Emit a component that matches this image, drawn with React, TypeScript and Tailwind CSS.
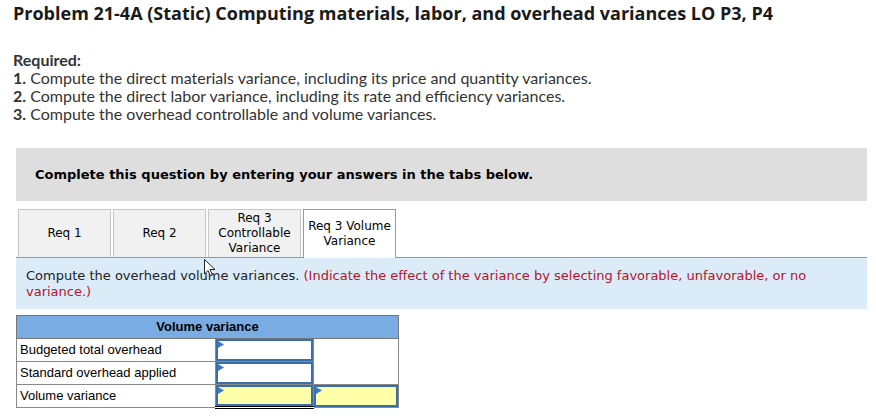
import React from "react";

const lato = "font-['Lato','Open_Sans',sans-serif]";
const openSans = "font-['Open_Sans','Lato',sans-serif]";
const verdana = "font-['DejaVu_Sans','Verdana',sans-serif]";
const arial = "font-['Liberation_Sans','Arial',sans-serif]";

function Marker() {
  return (
    <svg className="absolute left-0 top-0" width="7" height="8" viewBox="0 0 7 8">
      <path d="M0 0 L6 3.5 L0 7 Z" fill="#3b78c4" />
    </svg>
  );
}

function InputBox({ yellow }: { yellow?: boolean }) {
  return (
    <div
      className={`relative h-full w-full border-2 border-[#3a6ea8] ${yellow ? "bg-[#ffffaa]" : "bg-white"}`}
    >
      <Marker />
    </div>
  );
}

export default function App() {
  const tabs = [
    { label: ["Req 1"], active: false },
    { label: ["Req 2"], active: false },
    { label: ["Req 3", "Controllable", "Variance"], active: false },
    { label: ["Req 3 Volume", "Variance"], active: true },
  ];
  return (
    <div className="relative h-[416px] w-[876px] overflow-hidden bg-white text-[#333]">
      <h1 className={`${openSans} pl-[13px] pt-[1px] text-[18px] font-bold leading-[24px] text-[#1a1a1a]`}>
        Problem 21-4A (Static) Computing materials, labor, and overhead variances LO P3, P4
      </h1>
      <div className={`${lato} mt-[26px] pl-[13px] text-[16px] leading-[18px] text-[#333]`}>
        <div className="font-bold">Required:</div>
        <div>
          <span className="font-bold">1.</span> Compute the direct materials variance, including its price and quantity variances.
        </div>
        <div>
          <span className="font-bold">2.</span> Compute the direct labor variance, including its rate and efficiency variances.
        </div>
        <div>
          <span className="font-bold">3.</span> Compute the overhead controllable and volume variances.
        </div>
      </div>

      <div className="ml-4 mt-[25px] w-[851px]">
        <div className={`${verdana} flex h-[53px] items-center bg-[#dedede] pl-[19px] text-[13px] font-bold text-black`}>
          Complete this question by entering your answers in the tabs below.
        </div>

        <div className="mt-[8px] flex gap-[2px] pl-[2px]">
          {tabs.map((t, i) => (
            <div
              key={i}
              className={`${verdana} relative z-10 flex h-[48px] w-[93px] flex-col items-center justify-center border text-center text-[12px] leading-[15px] text-black ${
                t.active
                  ? "-mb-px h-[49px] border-b-0 border-[#999] bg-white"
                  : "border-b-0 border-[#c8c8c8] bg-[#f1f1f1]"
              }`}
            >
              {t.label.map((l, j) => (
                <div key={j}>{l}</div>
              ))}
            </div>
          ))}
        </div>

        <div className={`${verdana} border-t border-[#999] bg-[#dbebf8] px-[10px] pb-[9px] pt-[10px] text-[13px] leading-[16px] text-[#222]`}>
          Compute the overhead volume variances.{" "}
          <span className="text-[#b3152b]">
            (Indicate the effect of the variance by selecting favorable, unfavorable, or no variance.)
          </span>
        </div>

        <table className={`${arial} mt-[6px] w-[383px] border-collapse text-[13px] text-black`}>
          <tbody>
            <tr className="h-[23px]">
              <th colSpan={3} className="border border-[#777] bg-[#79ace3] p-0 text-center font-bold">
                Volume variance
              </th>
            </tr>
            <tr className="h-[23px]">
              <td className="w-[199px] border border-[#888] px-[3px] py-0">Budgeted total overhead</td>
              <td className="h-[23px] w-[98px] border border-[#888] p-0">
                <InputBox />
              </td>
              <td rowSpan={2} className="border border-[#888] p-0"></td>
            </tr>
            <tr className="h-[23px]">
              <td className="border border-[#888] px-[3px] py-0">Standard overhead applied</td>
              <td className="h-[23px] border border-[#888] p-0">
                <InputBox />
              </td>
            </tr>
            <tr className="h-[23px]">
              <td className="border border-[#888] px-[3px] py-0">Volume variance</td>
              <td
                className="h-[23px] border border-[#888] border-b-[3px] border-b-black p-0"
                style={{ borderBottomStyle: "double" }}
              >
                <InputBox yellow />
              </td>
              <td className="h-[23px] border border-[#888] p-0">
                <InputBox yellow />
              </td>
            </tr>
          </tbody>
        </table>
      </div>

      <svg className="pointer-events-none absolute left-[204px] top-[259px]" width="12" height="18" viewBox="0 0 12 18">
        <path d="M0.5 0.5 L0.5 15 L4 11.5 L6.5 17 L8.5 16 L6 10.5 L11 10.5 Z" fill="white" stroke="#222" strokeWidth="1" />
      </svg>
    </div>
  );
}
